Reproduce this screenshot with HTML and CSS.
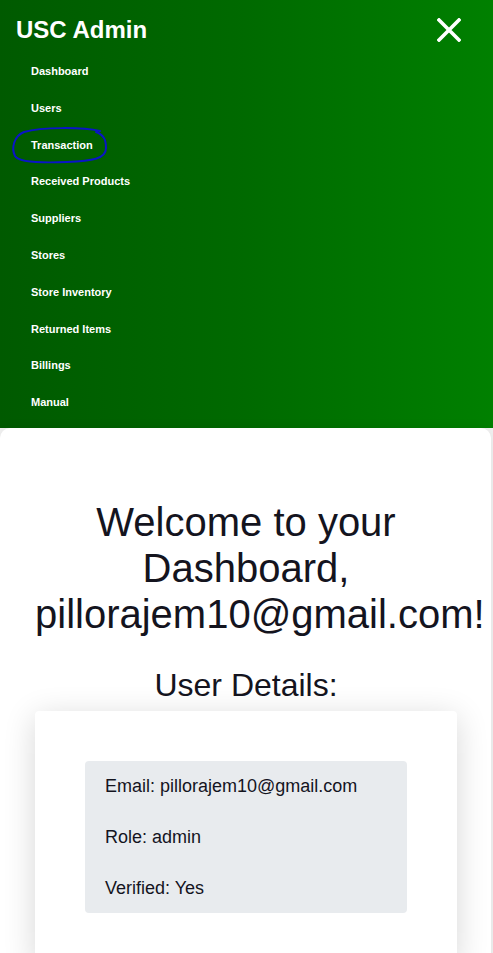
FILE: index.html
```html
<!DOCTYPE html>
<html lang="en">
<head>
<meta charset="utf-8">
<title>USC Admin</title>
<link rel="stylesheet" href="styles.css">
</head>
<body>
<header class="topbar">
  <div class="title-row">
    <span class="brand">USC Admin</span>
    <button class="close" aria-label="Close menu">
      <svg width="24" height="24" viewBox="0 0 24 24"><path d="M2 2 L22 22 M22 2 L2 22" stroke="#fff" stroke-width="3.6" stroke-linecap="square" fill="none"/></svg>
    </button>
  </div>
  <nav class="nav">
    <a class="nav-item" href="#">Dashboard</a>
    <a class="nav-item" href="#">Users</a>
    <a class="nav-item marked" href="#">Transaction<svg class="scribble" width="100" height="40" viewBox="0 0 100 40"><path d="M88 5 C70 1 30 1 12 6 C2 10 -1 22 3 30 C6 36 30 37 55 36 C80 35 94 33 94 22 C94 14 92 9 84 6" stroke="#0a14c8" stroke-width="2" fill="none" stroke-linecap="round"/></svg></a>
    <a class="nav-item" href="#">Received Products</a>
    <a class="nav-item" href="#">Suppliers</a>
    <a class="nav-item" href="#">Stores</a>
    <a class="nav-item" href="#">Store Inventory</a>
    <a class="nav-item" href="#">Returned Items</a>
    <a class="nav-item" href="#">Billings</a>
    <a class="nav-item" href="#">Manual</a>
  </nav>
</header>
<main class="panel">
  <h1 class="welcome">Welcome to your Dashboard, pillorajem10@gmail.com!</h1>
  <h2 class="subtitle">User Details:</h2>
  <section class="card">
    <div class="details">
      <p>Email: pillorajem10@gmail.com</p>
      <p>Role: admin</p>
      <p>Verified: Yes</p>
    </div>
  </section>
</main>
</body>
</html>
```

FILE: styles.css
```css
* { box-sizing: border-box; }
html, body { margin: 0; padding: 0; }
body {
  background: #f2f2f2;
  font-family: "Liberation Sans", Arial, sans-serif;
  color: #14141e;
  overflow: hidden;
}
.topbar {
  background: linear-gradient(90deg, #005a00 0%, #006a00 50%, #008000 100%);
  padding: 0 32px 7px 16px;
  height: 428px;
}
.title-row {
  display: flex;
  align-items: center;
  justify-content: space-between;
  padding-top: 12px;
  height: 48px;
}
.brand {
  color: #fff;
  font-weight: bold;
  font-size: 24px;
  line-height: 36px;
}
.close {
  background: none;
  border: 0;
  padding: 0;
  width: 24px;
  height: 24px;
  display: block;
  cursor: pointer;
}
.close svg { display: block; }
.nav {
  display: flex;
  flex-direction: column;
  padding-top: 5px;
}
.nav-item {
  position: relative;
  color: #fff;
  text-decoration: none;
  font-weight: bold;
  font-size: 11px;
  line-height: 12.8px;
  padding: 12px 0 12px 15px;
}
.scribble {
  position: absolute;
  left: -4px;
  top: -1px;
  width: 100px;
  height: 40px;
  overflow: visible;
}
.panel {
  background: #fff;
  margin-right: 2px;
  border-radius: 10px 10px 0 0;
  box-shadow: 0 0 12px rgba(0,0,0,0.08);
  padding: 71px 34px 0 35px;
  min-height: 530px;
}
.welcome {
  margin: 0;
  font-size: 40px;
  font-weight: normal;
  line-height: 46px;
  text-align: center;
}
.subtitle {
  margin: 30px 0 8px;
  font-size: 32px;
  font-weight: normal;
  line-height: 36px;
  text-align: center;
}
.card {
  background: #fff;
  border-radius: 4px;
  box-shadow: 0 6px 32px rgba(0,0,0,0.16);
  padding: 50px 50px 50px;
}
.details {
  background: #e8ebee;
  border-radius: 4px;
  padding: 15px 20px 14px;
  display: flex;
  flex-direction: column;
  gap: 30px;
}
.details p {
  margin: 0;
  font-size: 18px;
  line-height: 21px;
}
```
